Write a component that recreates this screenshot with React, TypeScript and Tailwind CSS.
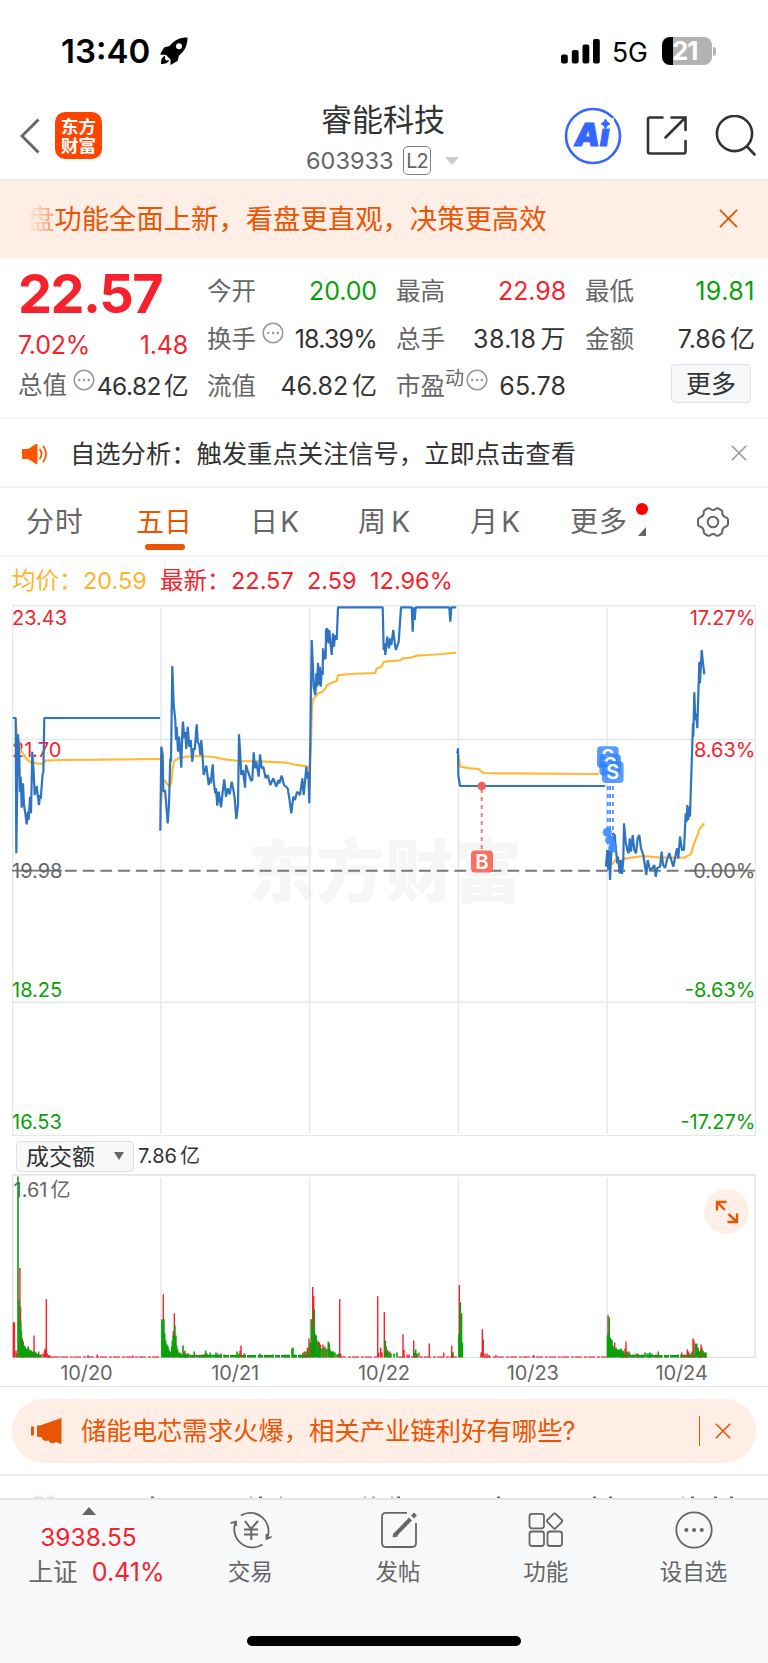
import type { ReactNode } from 'react'

type Bar = [number, number]

const TABS = [
  { label: '分时', width: 'w-[57px]', margin: 'ml-[26px]' },
  { label: '五日', width: 'w-[56px]', margin: 'ml-[53px]', active: true },
  { label: '日K', width: 'w-[49px]', margin: 'ml-[58px]' },
  { label: '周K', width: 'w-[52px]', margin: 'ml-[59px]' },
  { label: '月K', width: 'w-[50px]', margin: 'ml-[60px]' },
  { label: '更多', width: 'w-[57px]', margin: 'ml-[50px]' },
]

const DAYS = ['10/20', '10/21', '10/22', '10/23', '10/24']

const GRID_X = [149, 297.5, 446.5, 595]

const PRICE_LINES = [
  '0.7,113 3.7,113 4.3,248.3 6,129.3 7.3,150 8,186.7 8.7,171.7 9.7,202.7 11,178.3 12,200 13.3,208 14.7,219.3 16,206.7 16.7,215 18,191.7 19,208.3 20.3,146.7 21.7,168.3 22.7,190 24.7,181 25.7,190 27,200 28,190 28.7,194 30,176.7 30.7,168.3 31.3,168.3 32.3,113 148,113',
  '148.3,225.7 149.3,141.7 150.7,150 151.3,186.7 153,185 154,196.7 155.7,218.3 157,200 158.3,153.3 159,156.7 160.3,61 161.7,100 163.3,115 164,135 164.7,121.7 166,146.7 167,131.7 168.3,146.7 169.3,162.7 170.3,126.7 171,116.7 172.3,133.3 173.3,127 174.3,144 175.7,121.7 177.3,141.7 178.7,135 180.3,156.7 181.7,143.3 182.7,145 184.7,119.3 185.7,136.7 187.3,140 188.3,150 189.3,135 190.3,146.7 191.7,170 194.3,160.7 196.7,180 198,173 198.7,178.3 200.7,159.3 201.7,176.7 203.3,188.3 204,183.3 205.3,200.7 206.7,186.7 209,202.3 210.7,186.7 212.3,174.3 214,191.7 215.7,183.3 217.7,189.3 219.7,176.7 221.7,186.7 222.7,193.3 224.3,214 226,200 227,129.3 228.3,150 229.3,170 231,165 233,182.7 234,160 236,166.7 239,175.7 240.3,175 241.7,147.3 243,163.3 244.3,156.7 246.7,171.7 248,149.3 249.7,163.3 251.3,161.7 253.7,173.3 255.7,170 258.3,180 261.3,173.3 264.3,181.7 266.3,175 267.3,178.3 269.7,170.7 272,180 275.7,183.3 277.3,193.3 279.3,208.3 281.3,191.7 283,195 285,186.7 288,190 290.3,173.3 291.7,190 293.3,173.3 294.3,161.7 295,173.3 296.3,166.7 297.3,198.3 298.3,136.7 299.7,35 301,63.3 301.7,81.7 303.3,90 304.3,68.3 305,81.7 306,57.7 307,80 308,61.7 308.7,81.7 309.7,65 310.7,70 311,43.3 312.3,53.3 313.7,53.3 314,25 315.3,23.3 316.3,38.3 317.3,25 318.3,36.7 319.7,50 321,28.3 322,41.7 323,30 324.7,35 326,2.3 370.7,2.3 371.7,45 372.7,38.3 373.3,50 375.3,31.7 377,43.3 378.3,33.3 379.3,40 381.3,25 383,40 384,45 386.7,36.7 389,2.3 399.7,2.3 400.7,26.7 401.7,2.3 402.7,15 403.7,2.3 437.3,2.3 438.3,16.7 439.3,2.3 444.3,2.3',
  '445.3,148.3 446,143.3 446.3,170 448,181 593,181',
  '594,261.7 595.3,245 596.3,265 597,245 598,275 599.3,248 601,228.3 602.7,230 604,245 605.3,258.3 606,251.7 607.7,268.3 608.7,255 610,269 611.3,255 612,218.3 613.7,236.7 615.3,245 616.7,248.3 617.7,233.3 619,246.7 620.7,230 622.3,245 624,248.3 625.7,233 627.3,230 629,243.3 631.3,250 634.3,270 635.7,255 638,265 640.7,263 642.3,260 643.7,271.7 645.3,263 648,261.7 649.7,246.7 651,260 653,263 655,255 657.3,248 659.3,255 661.3,261.7 663,253 665,243.3 666.3,253.3 668,231.7 670,245 672,245 673.7,208.3 674.7,216.7 675.3,200 676.3,215 677,201.7 678,211.7 680,148.3 681,118.3 681.3,131.7 682.3,87.3 683.3,115 684.3,108.3 685.3,123.3 687.3,56.7 688,78.3 689.7,45 690.7,55 692.3,69.3',
]

const AVERAGE_LINES = [
  '3.7,113 4.7,129 7.3,143 10,147 14.7,154 18.7,157.3 24.7,158.3 31.3,159 33,155.7 48,155 88,154.7 148,154',
  '149,200 150.7,175 152,175 154.7,178.3 157.3,181.7 159.3,178 160.7,163 162.3,156 166.3,153.3 174.7,151.7 188,151 201.3,152 213,154.3 226.3,156 248,156.3 274.7,157.7 281.3,159.3 296.3,161.7 297.5,185 298.5,150 300,103 301.3,94 304,91 306.3,88.3 310.7,86.7 313.3,83.3 315.3,80 319.7,77.7 324.7,76 326,70.3 338,69 363.3,68 364.3,64 369.7,61.3 371.3,57.3 375.3,56.3 388,55.3 390,53.7 399,52.7 404.7,50.7 416,50 431.3,49 440,48 444.3,47.7',
  '446.3,150 448.3,161.7 458,163.3 467,164 469.7,167 472,168 488,168.3 587,169',
  '599.7,260 603,255 606,257 613,253.7 621.3,252.3 631.3,251 648,252.7 672,252.7 678.7,249.3 683,235.7 685.3,231 687.3,224.3 692.3,218.3',
]

const AXIS_LABELS = [
  { y: 19.8, left: '23.43', right: '17.27%', color: 'fill-[#f5222d]' },
  { y: 152.3, left: '21.70', right: '8.63%', color: 'fill-[#f5222d]' },
  { y: 272.5, left: '19.98', right: '0.00%', color: 'fill-[#666666]' },
  { y: 391.5, left: '18.25', right: '-8.63%', color: 'fill-[#0aa00a]' },
  { y: 524, left: '16.53', right: '-17.27%', color: 'fill-[#0aa00a]' },
]

const RED_BARS: Bar[] = [
  [1.4, 35], [2.4, 35], [4, 7], [5, 4], [7.9, 89], [8.5, 50], [10.3, 19], [11.3, 16], [12.3, 12], [18.7, 7], [22, 22],
  [24, 5], [26.7, 6], [31, 4], [32.5, 7], [33.3, 9], [34.3, 58], [35.3, 4], [36.7, 2.5], [38, 2], [44, 1.5], [76, 2.5], [85.3, 3], [121, 2],
  [151.3, 63], [162.3, 44], [161.3, 26], [157, 6], [168, 5], [173, 7], [176, 4], [184, 3], [193, 4], [209, 4], [229, 12],
  [228, 7], [233, 3], [291, 5], [294, 6], [295.5, 10], [297, 19], [300.7, 70], [301.7, 61], [306.3, 16], [307.3, 15], [308.5, 13],
  [311, 13], [313, 11], [315, 9], [318.5, 7], [321.5, 6], [327.7, 58], [328.7, 4], [365.7, 61], [366.8, 5], [368.7, 10], [370, 5],
  [372.3, 45], [376, 7], [378, 6], [391, 23], [392, 8], [395, 3], [397, 3], [401.7, 17], [407, 5], [417.3, 14], [431.7, 5], [439.7, 12],
  [441, 5], [447.3, 72], [469, 5], [470.3, 28], [471.3, 18], [473, 4], [475, 4], [477, 2.5], [484, 2.5], [521.5, 2.5], [596, 42],
  [599.5, 18], [602.7, 15], [613, 9], [614, 16], [617, 6], [626, 4], [644, 3], [669.7, 5], [672, 3], [675.3, 8], [676.5, 6],
  [681, 19], [682, 17], [689, 13], [690, 10], [693, 5],
]

const GREEN_BARS: Bar[] = [
  [6, 180], [6.9, 57], [8.7, 36], [9.4, 26], [10, 18], [11, 14], [12, 11], [13, 11], [14, 9], [15, 9], [16.3, 11], [17.3, 8],
  [19.3, 7], [20.3, 6], [21, 5], [22.5, 7], [23.3, 5], [25, 4], [26, 3], [27.5, 3], [29, 3],
  [149.9, 38], [151.9, 38], [150.8, 36], [152.7, 24], [153.7, 17], [155, 13], [156, 11], [157, 8], [158.7, 6], [159.7, 11], [160.3, 17],
  [161.2, 22], [162.9, 32], [163.9, 22], [164.7, 12], [165.7, 8], [167, 5], [169, 4], [171, 12], [172, 5], [174, 4], [176, 4], [178, 3],
  [182.3, 6], [188, 2], [191, 3], [193.7, 7], [195, 4], [198, 5], [201, 3], [204, 5], [206, 4], [209, 3], [212, 3], [225, 6], [227, 4],
  [232, 4], [240, 2], [248, 4], [254, 2], [261, 3], [273, 3], [276, 3], [280, 9], [281, 10], [283, 3], [288, 3], [291, 4], [292.5, 6],
  [296, 5], [298, 15], [299.2, 38], [300.3, 30], [302.3, 48], [303.3, 23], [304.1, 22], [305, 17], [306.7, 12], [308, 11], [310, 9], [312, 10],
  [314, 8], [316.3, 16], [317.3, 14], [318, 8], [319.5, 6], [321, 6], [323, 5], [325, 3], [326.5, 4], [373.4, 17], [374.3, 11],
  [375.3, 7], [377, 5], [379, 4], [382, 4], [385, 5], [402.7, 5], [403.7, 8], [405, 4], [440.7, 5], [446.9, 23], [448.3, 55],
  [449.5, 44], [450.3, 15], [595.5, 22], [597.2, 40], [596.3, 24], [598.2, 20], [599, 18], [600, 17], [601, 12], [602, 9], [603, 8], [604, 10], [605, 8],
  [606.5, 8], [608, 8], [609, 9], [610, 6], [611, 7], [612, 5], [615, 6], [616, 5], [618, 4], [621, 3], [624, 4], [626.5, 3], [630, 3],
  [633, 5], [635, 4], [637, 4], [638, 5], [640, 4], [646.3, 6], [650, 2], [655, 2], [666, 3], [669, 3], [674, 3], [678, 4], [680, 6],
  [683.5, 14], [684.7, 14], [686, 10], [687.3, 6], [688.5, 8], [691, 7], [692, 5], [694, 5],
]

function barPath(bars: Bar[]) {
  return bars.map(([x, h]) => `M${x} 182.5V${182.5 - h}`).join('')
}

function CloseIcon({ className }: { className: string }) {
  return (
    <svg viewBox="0 0 20 20" className={className} fill="none" stroke="currentColor">
      <path d="M1 1 19 19M19 1 1 19" />
    </svg>
  )
}

function InfoIcon() {
  return (
    <svg viewBox="0 0 22 22" className="h-[22px] w-[22px] flex-none text-[#999999]" fill="none" stroke="currentColor" strokeWidth="1.6">
      <circle cx="11" cy="11" r="9.8" />
      <path d="M6.2 11h.1M11 11h.1M15.8 11h.1" strokeWidth="2.4" strokeLinecap="round" />
    </svg>
  )
}

function StatusBar() {
  return (
    <div className="flex h-[88px] items-start pt-[36px] text-black">
      <div className="ml-[61px] flex h-[31px] w-[92px] items-center whitespace-nowrap text-[33px] font-semibold leading-none">13:40</div>
      <svg viewBox="0 0 28 28" className="ml-[7px] mt-px h-7 w-7">
        <path fillRule="evenodd" d="M27.5.5C20 .5 14 3 9.500 9L4 10.500 0 17.500l6 .5 4.500 4.500L10.500 28l7-4 1.500-5.500C25 14 27.500 8 27.500.5ZM19 6.200a3 3 0 1 1 0 6 3 3 0 0 1 0-6Z" />
        <path d="M5 19c-3 .5-4 4-4 8 4 0 7.500-1 8-4L6.500 23.500 5 22Z" />
      </svg>
      <svg viewBox="0 0 40 26" className="ml-[373px] mt-[2px] h-[26px] w-10">
        <rect x="0" y="16.500" width="6.800" height="9" rx="2" />
        <rect x="10.800" y="12" width="6.800" height="13.500" rx="2" />
        <rect x="21.500" y="6.500" width="6.800" height="19" rx="2" />
        <rect x="32" y="1" width="6.800" height="24.500" rx="2" />
      </svg>
      <div className="ml-[11px] flex h-8 w-[40px] items-center text-[26.500px] leading-none">5G</div>
      <div className="ml-[10px] mt-px flex h-7 w-[50px] items-center rounded-[8px] bg-linear-to-r from-black from-[22%] to-[#b3b3b3] to-[22%] pl-[10px] text-[26px] font-bold leading-none tracking-[-1.2px] text-white">
        21
      </div>
      <div className="ml-[1px] mt-[11px] h-[9px] w-[3px] rounded-r-full bg-[#b3b3b3]" />
    </div>
  )
}

function Header() {
  return (
    <header className="flex h-[93px] items-start border-b-2 border-[#ebebeb]">
      <svg viewBox="0 0 20 36" className="ml-[20px] mt-[30px] h-9 w-5 flex-none" fill="none" stroke="#666666" strokeWidth="3">
        <path d="M18.500 1.500 2 18l16.500 16.500" />
      </svg>
      <div className="ml-[15px] mt-[24px] flex h-[47px] w-[47px] flex-none flex-col items-center justify-center rounded-[10px] bg-[#ff4400] text-[17.500px] font-bold leading-[19px] text-white">
        <span>东方</span>
        <span>财富</span>
      </div>
      <div className="ml-[180px] flex w-[200px] flex-none flex-col items-center">
        <div className="ml-[2px] mt-[14px] h-9 whitespace-nowrap text-[31px] leading-9 text-[#333333]">睿能科技</div>
        <div className="mt-[7px] flex h-[31px] w-full items-center pl-[24px] text-[#666666]">
          <span className="w-[97px] text-[23.500px] leading-none">603933</span>
          <span className="flex h-[29px] w-[28px] items-center justify-center rounded-[5px] border-[1.500px] border-[#808080] text-[20px] leading-none tracking-[-1px]">L2</span>
          <svg viewBox="0 0 14 8" className="ml-[14px] h-2 w-[14px] fill-[#cccccc]">
            <path d="M0 0h14L7 8Z" />
          </svg>
        </div>
      </div>
      <svg viewBox="0 0 58 58" className="ml-[82px] mt-[19px] h-[58px] w-[58px] flex-none">
        <circle cx="29" cy="29" r="27" fill="none" stroke="#3566ff" strokeWidth="2.600" />
        <text x="10.500" y="38.800" className="fill-[#3566ff] stroke-[#3566ff] text-[32px] font-black italic" strokeWidth="1">Ai</text>
        <rect x="35" y="11" width="15" height="10.500" fill="#ffffff" />
        <path d="M41.500 12q1 3.800 4.500 4.800-3.500 1-4.500 4.800-1-3.800-4.500-4.800 3.500-1 4.500-4.800Z" fill="#3566ff" stroke="#3566ff" />
      </svg>
      <svg viewBox="0 0 42 42" className="ml-[24px] mt-[27px] h-[42px] w-[42px] flex-none" fill="none" stroke="#333333" strokeWidth="2.600" strokeLinecap="round">
        <path d="M16.500 2.500H4q-2 0-2 2V36.500q0 2 2 2H37.500q2 0 2-2V26M25.500 2.500H39.500V15M39 3 19.500 22.500" />
      </svg>
      <svg viewBox="0 0 42 42" className="ml-[27px] mt-[27px] h-[42px] w-[42px] flex-none" fill="none" stroke="#333333" strokeWidth="2.600" strokeLinecap="round">
        <circle cx="19.500" cy="18.500" r="17.600" />
        <path d="m32 31.500 7.500 8" />
      </svg>
    </header>
  )
}

function Banner() {
  return (
    <div className="flex h-[77px] items-center bg-[#feeee6] text-[#ea5504]">
      <div className="ml-[27px] flex h-[34px] whitespace-nowrap text-[27.350px] leading-[34px]">
        <span className="bg-linear-to-r from-[#feeee6] to-[#f39a6a] bg-clip-text text-transparent">盘</span>
        <span>功能全面上新，看盘更直观，决策更高效</span>
      </div>
      <CloseIcon className="mb-[2px] ml-auto mr-[30px] h-[19px] w-[19px] stroke-2" />
    </div>
  )
}

interface QuoteProps {
  label: string
  value: string
  unit?: string
  color?: string
  spacing?: string
  sup?: string
  info?: boolean
}

function Quote({ label, value, unit, color = 'text-[#333333]', spacing = 'tracking-[-0.100px]', sup, info }: QuoteProps) {
  return (
    <div className="flex h-[48px] w-[170px] items-center justify-between">
      <div className="flex items-center">
        <span className="mt-[2px] whitespace-nowrap text-[24.500px] leading-none text-[#666666]">{label}</span>
        {sup && <span className="mb-[14px] text-[19px] leading-none text-[#666666]">{sup}</span>}
        {info && <div className={sup ? 'mb-[10px] ml-[2px]' : 'mb-[10px] ml-[6px]'}><InfoIcon /></div>}
      </div>
      <span className={`mt-[2px] whitespace-nowrap text-[25px] leading-none ${spacing} ${color}`}>
        {value}
        {unit && <span className="ml-[4px]">{unit}</span>}
      </span>
    </div>
  )
}

function Quotes() {
  return (
    <section className="flex h-[161px] gap-[19px] border-b-2 border-[#f5f5f5] pl-[18px] pt-[8px]">
      <div className="w-[170px]">
        <div className="flex h-[56px] items-center whitespace-nowrap text-[54px] font-bold leading-none tracking-[-1.500px] text-[#f5222d]">22.57</div>
        <div className="mt-[4px] flex h-[38px] items-center justify-between text-[25px] leading-none tracking-[-0.200px] text-[#f5222d]">
          <span>7.02%</span>
          <span>1.48</span>
        </div>
        <div className="mt-[-4px] flex h-[48px] items-center justify-between">
          <span className="mt-[2px] text-[24.500px] leading-none text-[#666666]">总值</span>
          <div className="mb-[9px] ml-[5px]"><InfoIcon /></div>
          <span className="whitespace-nowrap pt-[5px] text-[24.500px] leading-none tracking-[-0.500px] text-[#333333]">
            46.82<span className="ml-[3px]">亿</span>
          </span>
        </div>
      </div>
      <div>
        <Quote label="今开" value="20.00" color="text-[#0aa00a]" />
        <Quote label="换手" value="18.39%" spacing="tracking-[-0.800px]" info />
        <div className="-mt-px"><Quote label="流值" value="46.82" unit="亿" /></div>
      </div>
      <div>
        <Quote label="最高" value="22.98" color="text-[#f5222d]" />
        <Quote label="总手" value="38.18" unit="万" spacing="tracking-[0.500px]" />
        <div className="-mt-px"><Quote label="市盈" value="65.78" sup="动" spacing="tracking-[0.100px]" info /></div>
      </div>
      <div>
        <Quote label="最低" value="19.81" color="text-[#0aa00a]" spacing="tracking-[0.500px]" />
        <Quote label="金额" value="7.86" unit="亿" />
        <button className="ml-[86px] mt-[2px] flex h-[39px] w-[80px] items-center justify-center rounded-[4px] border-[1.500px] border-[#dfe3e9] bg-[#f7f8fa] pt-[2px] text-[25px] leading-none text-[#333333]">
          更多
        </button>
      </div>
    </section>
  )
}

function Notice() {
  return (
    <div className="flex h-[69px] items-center border-b-2 border-[#f5f5f5]">
      <svg viewBox="0 0 26 22" className="ml-[22px] mt-[2px] h-[22px] w-[26px] fill-[#ff5500]">
        <path d="M1 6h5l8-5q1.500-.5 1.500 1v18q0 1.500-1.500 1L6 16H1q-1 0-1-1V7q0-1 1-1Z" />
        <path d="M18 6.500q3 4.500 0 9M21.500 3.500q5 7.500 0 15" fill="none" stroke="#ff5500" strokeWidth="1.800" strokeLinecap="round" />
      </svg>
      <div className="ml-[22px] mt-[2px] whitespace-nowrap text-[25.300px] leading-none text-[#333333]">自选分析：触发重点关注信号，立即点击查看</div>
      <CloseIcon className="ml-auto mr-[21px] h-[16px] w-[16px] stroke-2 text-[#999999]" />
    </div>
  )
}

function ChartTabs() {
  return (
    <nav className="flex h-[69px] items-center border-b-2 border-[#f5f5f5] text-[28px] leading-none text-[#666666]">
      {TABS.map((tab) => (
        <div
          key={tab.label}
          className={`${tab.width} ${tab.margin} relative flex h-full items-center justify-between whitespace-nowrap ${tab.active ? 'text-[#ea5504]' : ''}`}
        >
          {tab.label.split('').map((char) => (
            <span key={char}>{char}</span>
          ))}
          {tab.active && <span className="absolute bottom-[5px] left-[9px] h-[6px] w-[40px] rounded-full bg-[#ea5504]" />}
        </div>
      ))}
      <div className="ml-[9px] flex h-full flex-col items-center pt-[15px]">
        <span className="h-[12px] w-[12px] rounded-full bg-[#ff0000]" />
        <svg viewBox="0 0 8 9" className="mt-[12px] h-[9px] w-2 fill-[#666666]">
          <path d="M8 0v9H0Z" />
        </svg>
      </div>
      <svg viewBox="0 0 34 32" className="ml-[48px] h-8 w-[34px]" fill="none" stroke="#666666" strokeWidth="2">
        <path d="M11.500 2.500q2-.7 3.200.7 2.300 1.600 4.600 0Q20.500 1.800 22.500 2.500l3 1.800q1 1 .8 3.200.5 2.800 3.200 3.700 2 .5 2.500 2.300v5q-.5 1.800-2.500 2.300-2.700.9-3.200 3.700.2 2.200-.8 3.200l-3 1.800q-2 .7-3.200-.7-2.300-1.600-4.600 0-1.200 1.400-3.200.7l-3-1.800q-1-1-.8-3.200-.5-2.800-3.200-3.700-2-.5-2.500-2.300v-5q.5-1.800 2.500-2.300 2.700-.9 3.200-3.700-.2-2.200.8-3.200Z" />
        <circle cx="17" cy="16" r="5.300" />
      </svg>
    </nav>
  )
}

function Legend() {
  return (
    <div className="flex h-[48px] items-center whitespace-nowrap pl-[12px] text-[23.500px] leading-none text-[#f5222d]">
      <span className="w-[71px] text-[#ffb42e]">均价：</span>
      <span className="w-[77px] text-[#ffb42e]">20.59</span>
      <span className="w-[71px]">最新：</span>
      <span className="w-[76px]">22.57</span>
      <span className="w-[63px]">2.59</span>
      <span>12.96%</span>
    </div>
  )
}

function PriceChart() {
  return (
    <svg viewBox="0 0 744 531" className="ml-[12px] block h-[531px] w-[744px]">
      <text x="236" y="292" className="fill-[#f6f6f6] text-[68px] font-black" letterSpacing=".6">东方财富</text>
      <g fill="none" stroke="#e4e8ee" strokeWidth="1.500">
        <rect x=".75" y=".75" width="742.500" height="530" stroke="#dcdfe6" strokeWidth="1" />
        <path d="M1 134.500H743M1 397.300H743" />
        <path d={GRID_X.map((x) => `M${x} 2.500V529`).join('')} />
      </g>
      <path d="M0 265.700H50" stroke="#777777" strokeWidth="1.800" />
      <path d="M53 265.700H686" stroke="#777777" strokeWidth="2" strokeDasharray="11.700 6" />
      <path d="M678 265.700H743" stroke="#777777" strokeWidth="1.800" />
      {AXIS_LABELS.map((label) => (
        <g key={label.y} className={`${label.color} text-[20px]`}>
          <text x="0" y={label.y}>{label.left}</text>
          <text x="743.500" y={label.y} textAnchor="end">{label.right}</text>
        </g>
      ))}
      <g fill="none" strokeWidth="2.200" strokeLinejoin="bevel">
        {AVERAGE_LINES.map((points) => (
          <polyline key={points} points={points} stroke="#ffb938" />
        ))}
        {PRICE_LINES.map((points) => (
          <polyline key={points} points={points} stroke="#2f74c0" />
        ))}
      </g>
      <path d="M469.700 184V245" stroke="#f96a5c" strokeWidth="1.800" strokeDasharray="4 4" />
      <circle cx="469.700" cy="181" r="4.300" fill="#ee5f56" />
      <rect x="459" y="245.500" width="22" height="22" rx="4" fill="#fb6f60" />
      <text x="470" y="264" textAnchor="middle" className="fill-white text-[20.500px] font-semibold">B</text>
      <path d="M595.700 181V227M598 181V235M600.900 181V243" stroke="#4d94ff" strokeWidth="1.900" strokeDasharray="4 4" />
      {[[595.3, 227.3], [597.7, 235.3], [600.7, 243]].map(([x, y]) => (
        <circle key={x} cx={x} cy={y} r="4.500" fill="#3a8bff" fillOpacity=".9" />
      ))}
      {[[585, 141.3], [587.4, 149], [590, 156.300]].map(([x, y]) => (
        <g key={x}>
          <rect x={x} y={y} width="21.600" height="21.600" rx="4" fill="#2f83fb" fillOpacity=".8" />
          <text x={x + 10.8} y={y + 18} textAnchor="middle" className="fill-white text-[20px] font-semibold">S</text>
        </g>
      ))}
    </svg>
  )
}

function VolumeChart() {
  return (
    <section>
      <div className="flex h-[38px] items-center pl-4 pt-[2px] text-[#333333]">
        <button className="flex h-[31px] w-[118px] items-center rounded-[4px] border border-[#dcdfe6] bg-[#f7f8fa] pl-[9px] text-[23px] leading-none">
          <span className="mt-[2px]">成交额</span>
          <svg viewBox="0 0 10 8" className="ml-[19px] h-2 w-[10px] fill-[#666666]">
            <path d="M0 0h10L5 8Z" />
          </svg>
        </button>
        <span className="ml-[4px] text-[20px] leading-none">7.86<span className="ml-[3px]">亿</span></span>
      </div>
      <div className="relative">
        <svg viewBox="0 0 744 183" className="ml-[12px] block h-[184px] w-[744px]" preserveAspectRatio="none">
          <rect x=".75" y=".9" width="742.500" height="181.600" fill="none" stroke="#dcdfe6" strokeWidth="1.300" />
          <path d={GRID_X.map((x) => `M${x} 3.500V182`).join('')} stroke="#e4e8ee" strokeWidth="1.500" />
          <text x="1.500" y="22.500" className="fill-[#666666] text-[20px]">1.61<tspan dx="3">亿</tspan></text>
          <g strokeWidth="1.300">
            <path d="M36 182H148M327 182H365M386 182H446M472 182H595" stroke="#f5222d" strokeDasharray="7 2 3 1" strokeOpacity=".75" />
            <path d="M167 181.300H298M607 181.300H694" stroke="#0aa00a" strokeWidth="2.500" strokeDasharray="9 2 5 1" />
          </g>
          <path d={barPath(RED_BARS)} stroke="#f5222d" strokeWidth="1.400" />
          <path d={barPath(GREEN_BARS)} stroke="#0aa00a" strokeWidth="1.600" />
        </svg>
        <button className="absolute right-[19px] top-[15px] flex h-[45px] w-[45px] items-center justify-center rounded-full bg-[#fef0e9]">
          <svg viewBox="0 0 24 24" className="h-6 w-6" fill="none" stroke="#ea5504" strokeWidth="2.400">
            <path d="M2 10.500V2H11.500M2.500 2.500 10 10M22 13.500V22H12.500M21.500 21.500 13.500 14" />
          </svg>
        </button>
      </div>
      <div className="flex h-[29px] items-center border-b border-[#e1e4e8] px-[12px] pt-px text-[20px] leading-none tracking-[-0.100px] text-[#666666]">
        {DAYS.map((day) => (
          <span key={day} className="flex-1 text-center">{day}</span>
        ))}
      </div>
    </section>
  )
}

function PromoPill() {
  return (
    <div className="h-[89px] border-b-2 border-[#ebebeb] px-[12px] pt-[12px]">
      <div className="flex h-[64px] items-center rounded-full bg-[#feeee6] text-[#ea5504]">
        <svg viewBox="0 0 31 26" className="ml-[19px] h-[26px] w-[31px] fill-current">
          <path d="M0 8.500h3v9H0ZM6 7.500h3L30.500 0V26L25 24q-1 1.500-4 1-3 0-3-2.500l-3 .5q-4-1-4-3.500L6 18.500Z" />
        </svg>
        <span className="ml-[19px] whitespace-nowrap text-[25.350px] leading-none">储能电芯需求火爆，相关产业链利好有哪些?</span>
        <span className="ml-auto h-[30px] w-[1.500px] bg-[#ea5504]" />
        <CloseIcon className="ml-[15px] mr-[25px] h-4 w-4 stroke-2" />
      </div>
    </div>
  )
}

// top edge of the next tab strip, hidden under the bottom bar
function TabStripEdge() {
  return (
    <svg viewBox="0 0 768 22" className="block h-[22px] w-[768px]">
      <path d="M34 21.500h9M47 21.500h8" stroke="#fbd0b5" strokeWidth="1.500" />
      <path d="M151 21.300h3M259 21.300h3M397 21.300h3M497 21.300h3M593 21.300h3M609 21.300h3M691 21.300h3M714 21.300h3M730 21.300h3" stroke="#666666" strokeWidth="1.800" />
      <path d="M250 21.300h2M280 21.300h2M364 21.300h2M372 21.300h3M391 21.300h2M682 21.300h1.500" stroke="#aaaaaa" strokeWidth="1.800" />
    </svg>
  )
}

function NavItem({ label, children }: { label: string; children: ReactNode }) {
  return (
    <div className="flex w-[148px] flex-col items-center">
      <svg viewBox="0 0 44 44" className="mt-[8px] h-11 w-11" fill="none" stroke="#666666" strokeWidth="1.800">
        {children}
      </svg>
      <span className="mt-[8px] pr-px text-[22.500px] leading-[24px] text-[#666666]">{label}</span>
    </div>
  )
}

function BottomBar() {
  return (
    <footer className="h-[165px] border-t-2 border-[#e6e6e6] bg-[#f7f8fa]">
      <div className="flex h-[136px]">
        <div className="flex w-[177px] flex-none flex-col items-center text-[24.500px] leading-none text-[#f5222d]">
          <svg viewBox="0 0 14 8" className="mt-[7px] h-2 w-[14px] fill-[#666666]">
            <path d="M7 0 14 8H0Z" />
          </svg>
          <span className="mt-[10px] h-6">3938.55</span>
          <div className="ml-[16px] mt-[11px] flex w-[136px] items-center justify-between whitespace-nowrap">
            <span className="text-[24.500px] text-[#666666]">上证</span>
            <span className="text-[25px]">0.41%</span>
          </div>
        </div>
        <NavItem label="交易">
          <path d="M11.800 7.500A18.300 18.300 0 0 1 38 30.500M33.500 36.500A18.300 18.300 0 0 1 6.500 14.500M1.500 15.200 7 13.600V18M42.500 28.800 37.500 30.800V26" />
          <path d="m16 13 6 8 7-8M22.300 21V32M15 21.500H29M15 26.500H29" strokeWidth="2" />
        </NavItem>
        <NavItem label="发帖">
          <path d="M30 4.800H9q-4 0-4 4V35q0 4 4 4H35q4 0 4-4V15" />
          <path d="m18.500 26.500 15-15.500M35.500 9l3-3" strokeWidth="4" />
          <path d="m16 29 1-4 3.500 3Z" fill="#666666" strokeWidth="1" />
        </NavItem>
        <NavItem label="功能">
          <rect x="5.500" y="5.800" width="14.500" height="14.500" rx="2.500" />
          <rect x="5.500" y="23.500" width="14.500" height="14.500" rx="2.500" />
          <rect x="23.500" y="23.500" width="14.500" height="14.500" rx="2.500" />
          <rect x="24.800" y="7.200" width="11.600" height="11.600" rx="1.500" transform="rotate(45 30.600 13)" />
        </NavItem>
        <NavItem label="设自选">
          <circle cx="22" cy="22" r="17.700" />
          <path d="M14.300 22h.1M22 22h.1M29.700 22h.1" strokeWidth="4" strokeLinecap="round" />
        </NavItem>
      </div>
      <div className="mx-auto h-[10px] w-[274px] rounded-full bg-black" />
    </footer>
  )
}

export default function App() {
  return (
    <div className="flex h-[1663px] w-[768px] flex-col overflow-hidden bg-white font-['Inter','Noto_Sans_CJK_SC',sans-serif]">
      <StatusBar />
      <Header />
      <Banner />
      <Quotes />
      <Notice />
      <ChartTabs />
      <Legend />
      <PriceChart />
      <VolumeChart />
      <PromoPill />
      <TabStripEdge />
      <BottomBar />
    </div>
  )
}
